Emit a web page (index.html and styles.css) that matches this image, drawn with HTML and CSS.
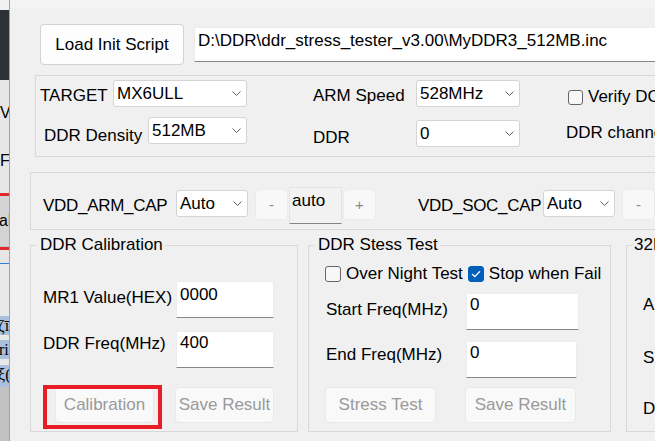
FILE: index.html
```html
<!DOCTYPE html>
<html>
<head>
<meta charset="utf-8">
<title>DDR Stress Tester</title>
<link rel="stylesheet" href="styles.css">
</head>
<body>
<div class="screen">
  <div class="side">
    <div class="s-top"></div>
    <div class="s-dark"></div>
    <div class="s-list"><span class="s-v">V</span><span class="s-f">F</span></div>
    <div class="s-red"></div>
    <div class="s-btn">al</div>
    <div class="s-red"></div>
    <div class="s-gap"></div>
    <div class="s-blue"></div>
    <div class="s-white"></div>
    <div class="s-hl s-hl1">ζī</div>
    <div class="s-sp"></div>
    <div class="s-hl s-hl2">ri</div>
    <div class="s-sp s-sp2"></div>
    <div class="s-hl s-hl3">ξ(</div>
    <div class="s-bottom"></div>
  </div>

  <div class="main">
    <div class="topband"></div>

    <div class="row-load">
      <button class="btn btn-load">Load Init Script</button>
      <div class="field path">D:\DDR\ddr_stress_tester_v3.00\MyDDR3_512MB.inc</div>
    </div>

    <div class="group g1">
      <div class="row r1">
        <span class="lbl l-target">TARGET</span>
        <div class="select sel-target"><span>MX6ULL</span><svg class="chev" width="9" height="5" viewBox="0 0 9 5"><polyline points="0.5,0.5 4.5,4.5 8.5,0.5"/></svg></div>
        <span class="lbl l-arm">ARM Speed</span>
        <div class="select sel-arm"><span>528MHz</span><svg class="chev" width="9" height="5" viewBox="0 0 9 5"><polyline points="0.5,0.5 4.5,4.5 8.5,0.5"/></svg></div>
        <span class="cb cb-verify"></span>
        <span class="lbl l-verify">Verify DCD</span>
      </div>
      <div class="row r2">
        <span class="lbl l-density">DDR Density</span>
        <div class="select sel-density"><span>512MB</span><svg class="chev" width="9" height="5" viewBox="0 0 9 5"><polyline points="0.5,0.5 4.5,4.5 8.5,0.5"/></svg></div>
        <span class="lbl l-ddr">DDR</span>
        <div class="select sel-ddr"><span>0</span><svg class="chev" width="9" height="5" viewBox="0 0 9 5"><polyline points="0.5,0.5 4.5,4.5 8.5,0.5"/></svg></div>
        <span class="lbl l-chan">DDR channel</span>
      </div>
    </div>

    <div class="group g2">
      <div class="row r3">
        <span class="lbl l-vddarm">VDD_ARM_CAP</span>
        <div class="select sel-cap"><span>Auto</span><svg class="chev" width="9" height="5" viewBox="0 0 9 5"><polyline points="0.5,0.5 4.5,4.5 8.5,0.5"/></svg></div>
        <button class="btn step step-minus">-</button>
        <div class="autobox">auto</div>
        <button class="btn step step-plus">+</button>
        <span class="lbl l-vddsoc">VDD_SOC_CAP</span>
        <div class="select sel-cap"><span>Auto</span><svg class="chev" width="9" height="5" viewBox="0 0 9 5"><polyline points="0.5,0.5 4.5,4.5 8.5,0.5"/></svg></div>
        <button class="btn step step-minus2">-</button>
      </div>
    </div>

    <div class="boxes">
      <fieldset class="fs fs-cal">
        <legend>DDR Calibration</legend>
        <div class="frow fr-mr1">
          <span class="lbl fl-mr1">MR1 Value(HEX)</span>
          <div class="field input in-mr1">0000</div>
        </div>
        <div class="frow fr-freq">
          <span class="lbl fl-freq">DDR Freq(MHz)</span>
          <div class="field input in-freq">400</div>
        </div>
        <div class="frow fr-btns">
          <div class="mark-wrap">
            <button class="btn dis b-cal">Calibration</button>
            <span class="redmark"></span>
          </div>
          <button class="btn dis b-save1">Save Result</button>
        </div>
      </fieldset>

      <fieldset class="fs fs-stress">
        <legend>DDR Stess Test</legend>
        <div class="frow fr-checks">
          <span class="cb cb-night"></span>
          <span class="lbl ck-text">Over Night Test</span>
          <span class="cb cb-on"><svg width="10" height="8" viewBox="0 0 10 8"><polyline points="1,4 3.8,6.6 9,1.2"/></svg></span>
          <span class="lbl ck-text">Stop when Fail</span>
        </div>
        <div class="frow fr-start">
          <span class="lbl fl-s">Start Freq(MHz)</span>
          <div class="field input in-start">0</div>
        </div>
        <div class="frow fr-end">
          <span class="lbl fl-e">End Freq(MHz)</span>
          <div class="field input in-end">0</div>
        </div>
        <div class="frow fr-btns2">
          <button class="btn dis b-stress">Stress Test</button>
          <button class="btn dis b-save2">Save Result</button>
        </div>
      </fieldset>

      <fieldset class="fs fs-32">
        <legend>32Bit</legend>
        <span class="lbl l32 l32-a">A</span>
        <span class="lbl l32 l32-s">S</span>
        <span class="lbl l32 l32-d">D</span>
      </fieldset>
    </div>
  </div>
</div>
</body>
</html>
```

FILE: styles.css
```css
* { box-sizing: border-box; }

html, body {
  margin: 0;
  padding: 0;
  background: #f0f0f0;
}

body {
  font-family: "Liberation Sans", Arial, sans-serif;
  font-size: 17px;
  color: #000;
}

.screen {
  display: flex;
  width: 655px;
  height: 441px;
  overflow: hidden;
}

/* ---------- background window sliver on the left ---------- */
.side {
  flex: none;
  width: 10px;
  display: flex;
  flex-direction: column;
  border-right: 1px solid #a3a3a3;
  overflow: hidden;
  background: #e4e4e4;
  font-size: 16px;
  line-height: 18px;
}
.s-top { height: 10px; background: #f1f1f1; }
.s-dark { height: 70px; background: #2d3135; }
.s-list {
  height: 113px;
  background: #e6e6e6;
  display: flex;
  flex-direction: column;
}
.s-v { margin-top: 24px; }
.s-f { margin-top: 30px; }
.s-red { height: 3px; background: #dc2a2e; flex: none; }
.s-btn {
  height: 51px;
  background: #d4d4d4;
  padding-top: 16px;
  margin-left: -1px;
  border-bottom: 1px solid #c4c4c4;
}
.s-gap { height: 13px; background: #e6e6e6; }
.s-blue { height: 1px; background: #2b82d6; }
.s-white { height: 52px; background: #e9e9e9; }
.s-hl {
  height: 19px;
  background: #a9c1dc;
  font-family: "Liberation Serif", serif;
  font-size: 16px;
  line-height: 19px;
  white-space: nowrap;
}
.s-hl1 { margin-left: -2px; }
.s-hl2 { margin-left: -1px; }
.s-hl3 { height: 22px; margin-left: -2px; }
.s-sp { height: 5px; background: #e9e9e9; }
.s-sp2 { height: 6px; }
.s-bottom { flex: 1; background: #c2c2c2; }

/* ---------- main dialog ---------- */
.main {
  flex: none;
  width: 645px;
  height: 441px;
  background: #f0f0f0;
  display: flex;
  flex-direction: column;
  overflow: hidden;
}
.topband { flex: none; height: 8px; background: #f4f4f4; }

.lbl {
  flex: none;
  line-height: 18px;
  white-space: nowrap;
}

.btn {
  font-family: "Liberation Sans", Arial, sans-serif;
  font-size: 17px;
  line-height: 18px;
  padding: 0;
  margin: 0;
  color: #000;
  border-radius: 4px;
  flex: none;
  white-space: nowrap;
}

.row-load {
  flex: none;
  display: flex;
  align-items: flex-start;
  margin-top: 16px;
  height: 41px;
}
.btn-load {
  margin-left: 30px;
  width: 144px;
  height: 41px;
  background: #fdfdfd;
  border: 1px solid #d2d2d2;
}
.field {
  background: #fff;
  border: 1px solid #ececec;
  border-bottom: 1px solid #868686;
  border-radius: 2px 2px 0 0;
  white-space: nowrap;
  line-height: 18px;
}
.path {
  flex: none;
  margin-left: 10px;
  margin-top: 3px;
  width: 520px;
  height: 35px;
  padding: 4px 0 0 3px;
}

/* group boxes */
.group {
  flex: none;
  border: 1px solid #d9d9d9;
  width: 700px;
  display: flex;
  flex-direction: column;
}
.g1 { margin-top: 10px; margin-left: 25px; height: 82px; }
.g2 { margin-top: 15px; margin-left: 20px; height: 58px; }

.row { display: flex; align-items: flex-start; flex: none; }
.r1 { height: 34px; }

.select {
  flex: none;
  display: flex;
  align-items: center;
  justify-content: space-between;
  height: 27px;
  background: #fff;
  border: 1px solid #d4d4d4;
  border-radius: 3px;
  padding: 0 5px 0 3px;
  line-height: 18px;
}
.chev { flex: none; }
.chev polyline { fill: none; stroke: #5f5f5f; stroke-width: 1; }

.l-target { margin-left: 4px; width: 73px; margin-top: 11px; }
.sel-target { width: 134px; margin-top: 4px; }
.l-arm { margin-left: 66px; width: 103px; margin-top: 11px; }
.sel-arm { width: 104px; margin-top: 4px; }
.cb {
  flex: none;
  width: 15px;
  height: 15px;
  border: 1px solid #666;
  border-radius: 3px;
  background: #f7f7f7;
}
.cb-verify { margin-left: 48px; margin-top: 14px; }
.l-verify { margin-left: 5px; margin-top: 12px; }

.l-density { margin-left: 8px; width: 104px; margin-top: 17px; }
.sel-density { width: 99px; margin-top: 7px; }
.l-ddr { margin-left: 66px; width: 103px; margin-top: 19px; }
.sel-ddr { width: 104px; margin-top: 10px; }
.l-chan { margin-left: 46px; margin-top: 14px; }

.l-vddarm { margin-left: 12px; width: 133px; margin-top: 24px; letter-spacing: -0.3px; }
.sel-cap { width: 72px; margin-top: 17px; }
.step {
  width: 33px;
  height: 31px;
  margin-top: 16px;
  background: #f8f8f8;
  border: 1px solid #ebebeb;
  color: #8a8a8a;
  font-size: 15px;
}
.step-minus { margin-left: 7px; }
.step-plus { margin-left: 1px; }
.step-minus2 { margin-left: 7px; }
.autobox {
  flex: none;
  margin-left: 1px;
  margin-top: 14px;
  width: 53px;
  height: 37px;
  background: #f2f2f2;
  border: 1px solid #e4e4e4;
  border-bottom: 1px solid #858585;
  border-radius: 2px 2px 0 0;
  padding: 4px 0 0 2px;
  line-height: 18px;
}
.l-vddsoc { margin-left: 42px; width: 125px; margin-top: 24px; letter-spacing: -0.3px; }

/* fieldsets */
.boxes {
  flex: none;
  display: flex;
  align-items: flex-start;
  margin-top: 6px;
  margin-left: 20px;
}
.fs {
  flex: none;
  margin: 0;
  padding: 0;
  border: 1px solid #d9d9d9;
  height: 196px;
  display: flex;
  flex-direction: column;
  min-width: 0;
}
.fs legend {
  margin-left: 5px;
  padding: 0 2px 0 4px;
  line-height: 18px;
  font-size: 17px;
}
.fs-cal { width: 268px; }
.fs-stress { width: 303px; margin-left: 10px; }
.fs-32 { width: 100px; margin-left: 15px; }
.fs-32 legend { padding-left: 2px; }

.frow { flex: none; display: flex; align-items: flex-start; }
.input {
  flex: none;
  height: 37px;
  padding: 3px 0 0 3px;
}
.fr-mr1 { margin-top: 27px; height: 37px; }
.fl-mr1 { margin-left: 12px; width: 133px; margin-top: 8px; }
.in-mr1 { width: 98px; padding-top: 4px; }
.fr-freq { margin-top: 13px; height: 37px; }
.fl-freq { margin-left: 12px; width: 133px; margin-top: 4px; }
.in-freq { width: 98px; padding-top: 2px; }
.fr-btns { margin-top: 19px; height: 36px; }

.dis {
  height: 36px;
  background: #f9f9f9;
  border: 1px solid #e9e9e9;
  color: #9a9a9a;
}
.mark-wrap { position: relative; flex: none; margin-left: 24px; }
.b-cal { width: 99px; display: block; }
.redmark {
  position: absolute;
  left: -12px;
  top: -2px;
  width: 119px;
  height: 44px;
  border: 4px solid #e81e26;
}
.b-save1 { margin-left: 21px; width: 99px; }

.fr-checks { margin-top: 11px; height: 17px; align-items: center; }
.cb-night { margin-left: 16px; width: 16px; height: 16px; }
.ck-text { margin-left: 5px; }
.cb-on {
  margin-left: 5px;
  width: 16px;
  height: 16px;
  background: #005fb8;
  border-color: #005fb8;
  display: flex;
  align-items: center;
  justify-content: center;
}
.cb-on polyline { fill: none; stroke: #fff; stroke-width: 1.3; }

.fr-start { margin-top: 11px; height: 37px; }
.fl-s { margin-left: 17px; width: 140px; margin-top: 8px; }
.in-start { width: 113px; padding-top: 2px; }
.fr-end { margin-top: 11px; height: 37px; }
.fl-e { margin-left: 17px; width: 140px; margin-top: 5px; }
.in-end { width: 111px; padding-top: 2px; }
.fr-btns2 { margin-top: 9px; height: 36px; }
.b-stress { margin-left: 16px; width: 111px; }
.b-save2 { margin-left: 29px; width: 111px; }

.l32 { margin-left: 16px; }
.l32-a { margin-top: 42px; }
.l32-s { margin-top: 35px; }
.l32-d { margin-top: 33px; }
```
